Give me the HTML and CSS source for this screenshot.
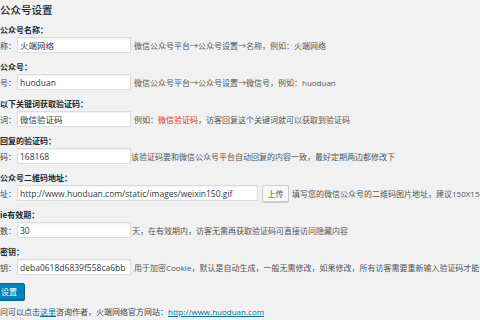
FILE: index.html
```html
<!DOCTYPE html>
<html lang="zh-CN">
<head>
<meta charset="utf-8">
<title>公众号设置</title>
<link rel="stylesheet" href="styles.css">
</head>
<body>
<h1 class="title">公众号设置</h1>
<form class="form">
  <section class="field">
    <h3 class="field-title">公众号名称：</h3>
    <div class="row"><label class="lbl">称：</label><input class="txt" value="火端网络"><span class="hint">微信公众号平台→公众号设置→名称，例如：火端网络</span></div>
  </section>
  <section class="field">
    <h3 class="field-title">公众号：</h3>
    <div class="row"><label class="lbl">号：</label><input class="txt" value="huoduan"><span class="hint">微信公众号平台→公众号设置→微信号，例如：huoduan</span></div>
  </section>
  <section class="field">
    <h3 class="field-title">以下关键词获取验证码：</h3>
    <div class="row"><label class="lbl">词：</label><input class="txt" value="微信验证码"><span class="hint">例如：<em class="red">微信验证码</em>，访客回复这个关键词就可以获取到验证码</span></div>
  </section>
  <section class="field">
    <h3 class="field-title">回复的验证码：</h3>
    <div class="row"><label class="lbl">码：</label><input class="txt" value="168168"><span class="hint hint-tight">该验证码要和微信公众号平台自动回复的内容一致，最好定期两边都修改下</span></div>
  </section>
  <section class="field">
    <h3 class="field-title">公众号二维码地址：</h3>
    <div class="row"><label class="lbl">址：</label><input class="txt txt-wide" value="http://www.huoduan.com/static/images/weixin150.gif"><button type="button" class="btn">上传</button><span class="hint">填写您的微信公众号的二维码图片地址，建议150X150</span></div>
  </section>
  <section class="field">
    <h3 class="field-title">ie有效期：</h3>
    <div class="row"><label class="lbl">数：</label><input class="txt" value="30"><span class="hint hint-none">天，在有效期内，访客无需再获取验证码可直接访问隐藏内容</span></div>
  </section>
  <section class="field">
    <h3 class="field-title">密钥：</h3>
    <div class="row"><label class="lbl">钥：</label><input class="txt" value="deba0618d6839f558ca6bb"><span class="hint">用于加密Cookie，默认是自动生成，一般无需修改，如果修改，所有访客需要重新输入验证码才能查</span></div>
  </section>
  <div class="actions"><button type="button" class="btn-primary">设置</button></div>
</form>
<p class="footer">问可以点击<a href="#">这里</a>咨询作者，火端网络官方网站：<a href="#">http://www.huoduan.com</a></p>
</body>
</html>
```

FILE: styles.css
```css
html, body {
  margin: 0;
  padding: 0;
  background: #f1f1f1;
  overflow: hidden;
}
body {
  width: 480px;
  height: 320px;
  font-family: "Open Sans", "Noto Sans CJK SC", sans-serif;
  font-size: 8px;
  color: #444;
  white-space: nowrap;
}
.title {
  margin: 0;
  padding-top: 2px;
  height: 16px;
  line-height: 16px;
  font-size: 10.5px;
  font-weight: 500;
  color: #23282d;
}
.form {
  margin-top: 5px;
}
.field {
  margin-bottom: 7px;
}
.field-title {
  margin: 0;
  height: 14px;
  line-height: 14px;
  font-size: 8px;
  font-weight: 700;
  color: #23282d;
}
.row {
  display: flex;
  align-items: center;
  height: 16px;
}
.lbl {
  width: 16px;
  flex: none;
  text-align: right;
  color: #444;
}
.txt {
  flex: none;
  box-sizing: border-box;
  width: 114px;
  height: 16px;
  margin: 0 0 0 1px;
  padding: 0 2px;
  border: 1px solid #ddd;
  background: #fff;
  box-shadow: inset 0 1px 2px rgba(0, 0, 0, 0.07);
  font-family: "Open Sans", "Noto Sans CJK SC", sans-serif;
  font-size: 8.5px;
  color: #32373c;
  outline: none;
}
.txt-wide {
  width: 241px;
}
.hint {
  margin-left: 3px;
  color: #555;
}
.hint-tight {
  margin-left: 0;
}
.hint-none {
  margin-left: 1px;
}
.red {
  font-style: normal;
  color: #dc3232;
}
.btn {
  flex: none;
  box-sizing: border-box;
  width: 27px;
  height: 17px;
  margin: 1px 0 0 4px;
  padding: 0;
  border: 1px solid #ccc;
  border-radius: 2px;
  background: #f7f7f7;
  box-shadow: 0 1px 0 #ccc;
  font-family: "Noto Sans CJK SC", sans-serif;
  font-size: 8px;
  color: #555;
}
.actions {
  padding-top: 1px;
}
.btn-primary {
  display: block;
  box-sizing: border-box;
  height: 17px;
  margin-left: -8px;
  padding: 0 7px 0 8px;
  border: 1px solid #006799;
  border-radius: 2px;
  background: #0085ba;
  box-shadow: 0 1px 0 #006799;
  font-family: "Noto Sans CJK SC", sans-serif;
  font-size: 8px;
  color: #fff;
}
.footer {
  margin: 6px 0 0 0;
  height: 12px;
  line-height: 12px;
  font-size: 8px;
  color: #444;
}
.footer a {
  color: #0073aa;
  text-decoration: underline;
}
```
